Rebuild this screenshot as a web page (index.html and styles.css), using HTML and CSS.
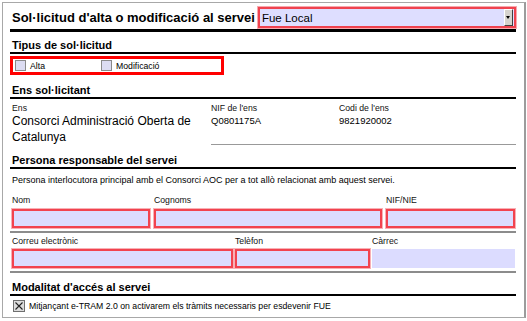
FILE: index.html
```html
<!DOCTYPE html>
<html lang="ca">
<head>
  <meta charset="UTF-8">
  <meta name="viewport" content="width=device-width, initial-scale=1.0">
  <title>Sol·licitud d'alta o modificació al servei</title>
  <link rel="stylesheet" href="styles.css">
</head>
<body>
  <div class="frame">
    <div class="header">
      <h1 class="title">Sol·licitud d'alta o modificació al servei</h1>
      <div class="select">
        <span class="select-value">Fue Local</span>
        <span class="select-arrow"></span>
      </div>
    </div>

    <h2 class="section-title section-type">Tipus de sol·licitud</h2>
    <div class="type-group">
      <label class="check"><span class="box"></span>Alta</label>
      <label class="check"><span class="box"></span>Modificació</label>
    </div>

    <h2 class="section-title section-ens">Ens sol·licitant</h2>
    <div class="ens-row">
      <div class="ens-name">
        <div class="label">Ens</div>
        <div class="value-big">Consorci Administració Oberta de Catalunya</div>
      </div>
      <div class="ens-codes">
        <div class="ens-col ens-nif">
          <div class="label">NIF de l'ens</div>
          <div class="value">Q0801175A</div>
        </div>
        <div class="ens-col">
          <div class="label">Codi de l'ens</div>
          <div class="value">9821920002</div>
        </div>
      </div>
    </div>

    <h2 class="section-title section-person">Persona responsable del servei</h2>
    <p class="description">Persona interlocutora principal amb el Consorci AOC per a tot allò relacionat amb aquest servei.</p>

    <div class="fields fields-first">
      <div class="label">Nom</div>
      <div class="label">Cognoms</div>
      <div class="label">NIF/NIE</div>
      <div class="field"></div>
      <div class="field"></div>
      <div class="field"></div>
    </div>

    <div class="fields fields-second">
      <div class="label">Correu electrònic</div>
      <div class="label">Telèfon</div>
      <div class="label">Càrrec</div>
      <div class="field"></div>
      <div class="field"></div>
      <div class="field field-plain"></div>
    </div>

    <h2 class="section-title section-access">Modalitat d'accés al servei</h2>
    <div class="access-row">
      <svg class="xbox" width="12" height="12" viewBox="0 0 12 12">
        <rect x="0.5" y="0.5" width="11" height="11" fill="#dcdcdc" stroke="#6f6f6f"/>
        <path d="M2.5 2.5 L9.5 9.5 M9.5 2.5 L2.5 9.5" stroke="#222" stroke-width="1.1"/>
      </svg>
      <span>Mitjançant e-TRAM 2.0 on activarem els tràmits necessaris per esdevenir FUE</span>
    </div>
  </div>
</body>
</html>
```

FILE: styles.css
```css
/* base */
body {
  margin: 0;
  font-family: "Liberation Sans", Arial, sans-serif;
  color: #000;
  background: #fff;
}

.frame {
  box-sizing: border-box;
  margin: 2px 0 0 2px;
  width: 524px;
  height: 316px;
  padding: 3px 8px 0 7px;
  border: 1px solid #a8a8a8;
  border-right: 2px solid #9c9c9c;
}

/* header */
.header {
  display: flex;
  align-items: center;
  height: 23px;
  border-bottom: 3px solid #000;
}

.title {
  margin: 0;
  padding-left: 2px;
  font-size: 13px;
  font-weight: bold;
  line-height: 16px;
  white-space: nowrap;
}

.select {
  flex: 1;
  display: flex;
  align-items: center;
  box-sizing: border-box;
  height: 21px;
  margin-left: 3px;
  border: 2px solid #f0434f;
  background: #dedeff;
  box-shadow: 0 0 0 1px #f7a9ae;
}

.select-value {
  padding-left: 2px;
  font-size: 11.5px;
}

.select-arrow {
  position: relative;
  box-sizing: border-box;
  width: 9px;
  height: 17px;
  margin-left: auto;
  margin-right: 1px;
  background: #d6d3ce;
  border: 1px solid;
  border-color: #fff #404040 #404040 #fff;
}

.select-arrow::after {
  content: "";
  position: absolute;
  left: 1px;
  top: 6px;
  border-left: 2.5px solid transparent;
  border-right: 2.5px solid transparent;
  border-top: 3px solid #000;
}

/* section headings */
.section-title {
  margin: 0;
  padding: 6px 0 0 2px;
  font-size: 11px;
  font-weight: bold;
  line-height: 14px;
  border-bottom: 2px solid #000;
}

.section-ens,
.section-person {
  padding-top: 8px;
}

.section-access {
  padding-top: 7px;
}

/* request type */
.type-group {
  display: flex;
  align-items: center;
  box-sizing: border-box;
  width: 214px;
  height: 19px;
  margin-top: 2px;
  padding-left: 2px;
  border: 3px solid #ff0000;
}

.check {
  display: flex;
  align-items: center;
  gap: 4px;
  width: 86px;
  font-size: 8.7px;
}

.box {
  box-sizing: border-box;
  width: 11px;
  height: 11px;
  border: 1px solid #8a8a8a;
  background: #dcdcf2;
}

/* applicant */
.label {
  font-size: 8.7px;
  line-height: 10px;
  color: #111;
}

.ens-row {
  display: flex;
  padding-top: 4px;
}

.ens-name {
  width: 199px;
  padding-left: 2px;
}

.value-big {
  font-size: 12px;
  line-height: 16px;
}

.ens-codes {
  flex: 1;
  display: flex;
  box-sizing: border-box;
  height: 42px;
  border-bottom: 1px solid #999;
}

.ens-nif {
  width: 128px;
}

.value {
  font-size: 9.5px;
  line-height: 16px;
}

/* responsible person */
.description {
  margin: 0;
  padding: 5px 0 0 2px;
  font-size: 9px;
  line-height: 12px;
}

.fields {
  display: grid;
  row-gap: 4px;
  column-gap: 4px;
  padding: 0 0 3px 2px;
  border-bottom: 2px solid #8c8c8c;
}

.fields-first {
  grid-template-columns: 138px 228px 129px;
  margin-top: 9px;
}

.fields-second {
  grid-template-columns: 221px 135px 143px;
  column-gap: 2px;
  row-gap: 3px;
  margin-top: 3px;
}

.field {
  box-sizing: border-box;
  height: 19px;
  background: #dcdcff;
  border: 2px solid #f2434f;
  box-shadow: 0 0 0 1px #f8b0b5;
}

.field-plain {
  border: none;
  box-shadow: none;
}

/* access */
.access-row {
  display: flex;
  align-items: center;
  gap: 4px;
  padding: 4px 0 0 3px;
  font-size: 8.7px;
  line-height: 12px;
}

.xbox {
  display: block;
}
```
